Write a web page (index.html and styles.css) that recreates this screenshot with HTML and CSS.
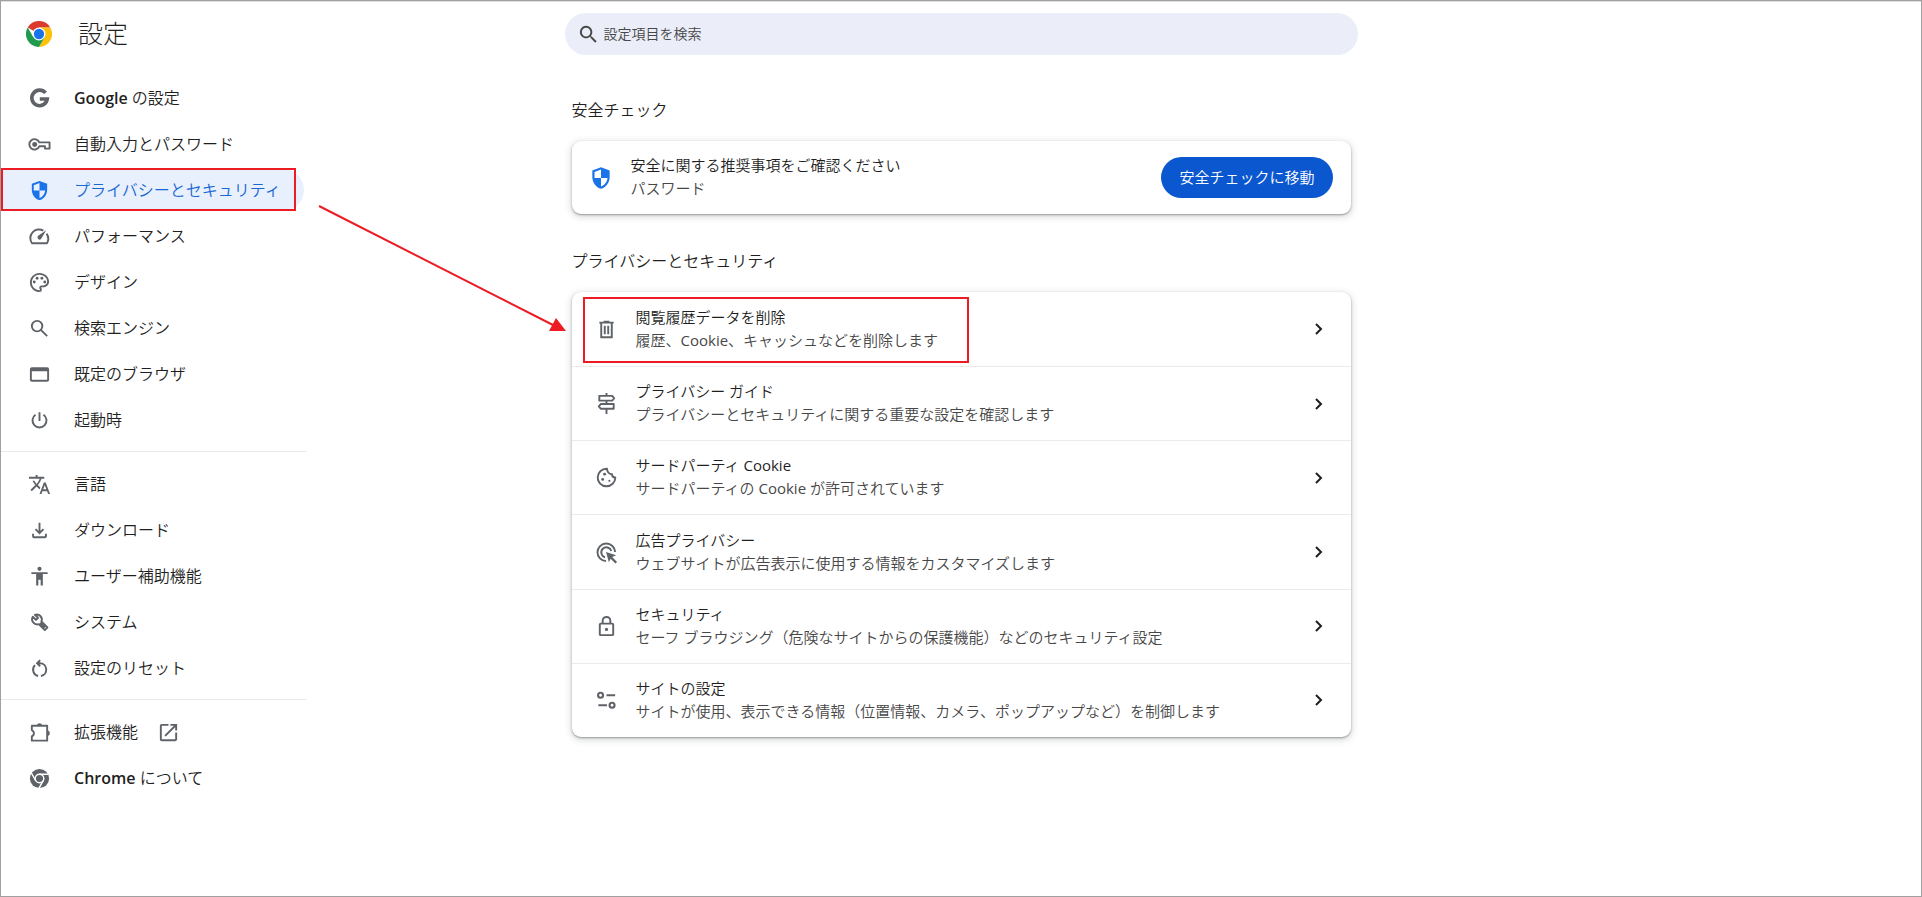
FILE: index.html
```html
<!DOCTYPE html>
<html lang="ja">
<head>
<meta charset="utf-8">
<meta name="viewport" content="width=device-width, initial-scale=1">
<title>設定</title>
<link rel="stylesheet" href="styles.css">
</head>
<body>
<div class="window">
  <header class="toolbar">
    <div class="brand">
      <svg class="logo" viewBox="0 0 48 48" aria-hidden="true">
        <path fill="#db3a2c" d="M24 24 3.2 12A24 24 0 0 1 44.8 12H24z"/>
        <path fill="#ffc107" d="M44.8 12A24 24 0 0 1 24 48L34.4 30 24 12z"/>
        <path fill="#209a4c" d="M3.2 12A24 24 0 0 0 24 48L34.4 30 24 24 13.6 30z"/>
        <circle cx="24" cy="24" r="12" fill="#fff"/>
        <circle cx="24" cy="24" r="9.5" fill="#1a73e8"/>
      </svg>
      <h1 class="title">設定</h1>
    </div>
    <label class="search">
      <svg class="search-icon" viewBox="0 0 24 24" aria-hidden="true"><path d="M15.5 14h-.79l-.28-.27A6.5 6.5 0 1 0 13.73 14.43l.27.28v.79l5 4.99L20.49 19zm-6 0a4.5 4.5 0 1 1 0-9 4.5 4.5 0 0 1 0 9z"/></svg>
      <input class="search-input" type="search" placeholder="設定項目を検索" aria-label="設定項目を検索">
    </label>
  </header>

  <div class="body">
    <nav class="sidebar" aria-label="設定">
      <ul class="menu">
        <li><a class="item" href="#google"><svg class="icon" viewBox="0 0 24 24"><path fill="none" stroke="currentColor" stroke-width="3.8" d="M18.3 6.2A8.1 8.1 0 1 0 20.1 12.500H12.3"/></svg><span class="label"><span class="latin">Google</span> の設定</span></a></li>
        <li><a class="item" href="#autofill"><svg class="icon" viewBox="0 0 24 24"><path fill="none" stroke="currentColor" stroke-width="2" stroke-linejoin="round" d="M11.800 9.800H22.500v6.500h-4.800v-2.400h-5.900A5.400 5.400 0 1 1 11.800 9.800z"/><circle cx="7" cy="12" r="2.600"/></svg><span class="label">自動入力とパスワード</span></a></li>
        <li><a class="item selected" href="#privacy" aria-current="page"><svg class="icon" viewBox="0 0 24 24"><path fill-rule="evenodd" d="M12 2 4 5v6.090c0 5.050 3.410 9.760 8 10.910 4.590-1.150 8-5.860 8-10.910V5zM12 4.100V12h6c-.5 3.700-2.900 6.900-6 7.900V12H6V6.400z"/></svg><span class="label">プライバシーとセキュリティ</span></a></li>
        <li><a class="item" href="#performance"><svg class="icon" viewBox="0 0 24 24"><path fill="none" stroke="currentColor" stroke-width="2" stroke-linejoin="round" d="M16 5.900A9 9 0 0 0 4.200 19H19.800A9 9 0 0 0 19.300 9"/><path d="m19 5.500-5.200 8.800a2.200 2.200 0 1 1-3.200-3z"/></svg><span class="label">パフォーマンス</span></a></li>
        <li><a class="item" href="#design"><svg class="icon" viewBox="0 0 24 24"><path d="M12 22C6.490 22 2 17.510 2 12S6.490 2 12 2s10 4.040 10 9c0 3.310-2.690 6-6 6h-1.770c-.28 0-.5.220-.5.500 0 .120.050.230.130.330.410.470.640 1.060.640 1.670A2.500 2.500 0 0 1 12 22m0-18c-4.410 0-8 3.590-8 8s3.590 8 8 8c.280 0 .5-.220.500-.5a.54.54 0 0 0-.140-.350c-.410-.460-.630-1.050-.630-1.650a2.500 2.500 0 0 1 2.500-2.500H16c2.210 0 4-1.790 4-4 0-3.860-3.590-7-8-7"/><circle cx="6.500" cy="11.500" r="1.500"/><circle cx="9.500" cy="7.500" r="1.500"/><circle cx="14.500" cy="7.500" r="1.500"/><circle cx="17.500" cy="11.500" r="1.500"/></svg><span class="label">デザイン</span></a></li>
        <li><a class="item" href="#search"><svg class="icon" viewBox="0 0 24 24"><g fill="none" stroke="currentColor" stroke-width="2"><circle cx="9.500" cy="9.500" r="5.500"/><path d="m13.400 13.400 6.600 6.600"/></g></svg><span class="label">検索エンジン</span></a></li>
        <li><a class="item" href="#browser"><svg class="icon" viewBox="0 0 24 24"><path fill-rule="evenodd" d="M4 4.500h16a2 2 0 0 1 2 2v11a2 2 0 0 1-2 2H4a2 2 0 0 1-2-2v-11a2 2 0 0 1 2-2m0 4v9h16v-9z"/></svg><span class="label">既定のブラウザ</span></a></li>
        <li><a class="item" href="#startup"><svg class="icon" viewBox="0 0 24 24"><path fill="none" stroke="currentColor" stroke-width="2" d="M12 3.500V12.500M7.800 6a7.300 7.300 0 1 0 8.400 0"/></svg><span class="label">起動時</span></a></li>
      </ul>
      <ul class="menu">
        <li><a class="item" href="#languages"><svg class="icon" viewBox="0 0 24 24"><path d="m12.870 15.070-2.540-2.510.030-.030A17.520 17.520 0 0 0 14.070 6H17V4h-7V2H8v2H1v1.990h11.170C11.500 7.920 10.440 9.750 9 11.350 8.070 10.320 7.300 9.190 6.690 8h-2c.730 1.630 1.730 3.170 2.980 4.560l-5.090 5.020L4 19l5-5 3.110 3.110zM18.500 10h-2L12 22h2l1.120-3h4.750L21 22h2zm-2.620 7 1.620-4.330L19.120 17z"/></svg><span class="label">言語</span></a></li>
        <li><a class="item" href="#downloads"><svg class="icon" viewBox="0 0 24 24"><path fill="none" stroke="currentColor" stroke-width="2" d="M12 4v10.500M7.800 10.500l4.200 4.200 4.200-4.200M5.300 15.500v2.500a1 1 0 0 0 1 1h11.400a1 1 0 0 0 1-1v-2.500"/></svg><span class="label">ダウンロード</span></a></li>
        <li><a class="item" href="#a11y"><svg class="icon" viewBox="0 0 24 24"><circle cx="12" cy="4" r="2.200"/><path d="M20.500 9.500H15.500V21.500h-2.300v-6h-2.400v6H8.500V9.500h-5v-2h17z"/></svg><span class="label">ユーザー補助機能</span></a></li>
        <li><a class="item" href="#system"><svg class="icon" viewBox="0 0 24 24"><path fill="none" stroke="currentColor" stroke-width="2" stroke-linejoin="round" d="m5 6 3.300 3.300 2.200-2.200L7.200 4A5.300 5.300 0 0 1 14 11l6.200 6.200-2.700 2.700L11.200 13.700A5.300 5.300 0 0 1 5 6zM12.500 12.500l5 5"/></svg><span class="label">システム</span></a></li>
        <li><a class="item" href="#reset"><svg class="icon" viewBox="0 0 24 24"><path fill="none" stroke="currentColor" stroke-width="2" d="M10.500 19.800A6.700 6.700 0 0 1 7.300 8.500M13.500 19.800A6.700 6.700 0 0 0 12.500 6.500H10M12.700 3.300 9.500 6.500l3.200 3.200"/></svg><span class="label">設定のリセット</span></a></li>
      </ul>
      <ul class="menu">
        <li><a class="item" href="#extensions"><svg class="icon" viewBox="0 0 24 24"><path fill="none" stroke="currentColor" stroke-width="2" stroke-linejoin="round" d="M4 5h16v15.500H4v-4.500c3-1.500 3-5 0-6.500z"/><path d="M9.300 5a2.700 2.700 0 0 1 5.400 0zM20 10a2.700 2.700 0 0 1 0 5.400z"/></svg><span class="label">拡張機能</span><svg class="icon external" viewBox="0 0 24 24"><path d="M19 19H5V5h7V3H5a2 2 0 0 0-2 2v14a2 2 0 0 0 2 2h14c1.100 0 2-.900 2-2v-7h-2zM14 3v2h3.590l-9.830 9.830 1.410 1.410L19 6.410V10h2V3z"/></svg></a></li>
        <li><a class="item" href="#about"><svg class="icon" viewBox="0 0 24 24"><circle cx="12" cy="12" r="10"/><g fill="none" stroke="#fff" stroke-width="1.500"><circle cx="12" cy="12" r="4.500"/><path d="M12 7.500h9.500M8.100 14.200 3.300 6M15.900 14.200 11.200 22.500"/></g></svg><span class="label"><span class="latin">Chrome</span> について</span></a></li>
      </ul>
    </nav>

    <main class="content">
      <section>
        <h2 class="heading">安全チェック</h2>
        <div class="card safety">
          <svg class="shield" viewBox="0 0 24 24" aria-hidden="true"><path fill-rule="evenodd" d="M12 2 4 5v6.090c0 5.050 3.410 9.760 8 10.910 4.590-1.150 8-5.860 8-10.910V5zM12 4.100V12h6c-.5 3.700-2.900 6.900-6 7.900V12H6V6.400z"/></svg>
          <div class="text"><div class="name">安全に関する推奨事項をご確認ください</div><div class="note">パスワード</div></div>
          <button class="action" type="button">安全チェックに移動</button>
        </div>
      </section>
      <section>
        <h2 class="heading">プライバシーとセキュリティ</h2>
        <div class="card rows">
          <a class="row" href="#clear"><svg class="icon" viewBox="0 0 24 24"><path fill="none" stroke="currentColor" stroke-width="2" d="M6.500 5v15h11V5M4.500 4.800h15M9 3.800h6M10.200 8v9M13.800 8v9"/></svg><span class="text"><span class="name">閲覧履歴データを削除</span><span class="note">履歴、Cookie、キャッシュなどを削除します</span></span><svg class="chevron" viewBox="0 0 12 12"><path d="m3 1 5 5-5 5"/></svg></a>
          <a class="row" href="#guide"><svg class="icon" viewBox="0 0 24 24"><path fill="none" stroke="currentColor" stroke-width="2" stroke-linejoin="round" d="M12 1v3M12 9v3.500M12 17.500V23M4.500 4h13.500L20 6.500 18 9H4.500zM19.500 12.500H6L4 15l2 2.500h13.500z"/></svg><span class="text"><span class="name">プライバシー ガイド</span><span class="note">プライバシーとセキュリティに関する重要な設定を確認します</span></span><svg class="chevron" viewBox="0 0 12 12"><path d="m3 1 5 5-5 5"/></svg></a>
          <a class="row" href="#cookies"><svg class="icon" viewBox="0 0 24 24"><path fill="none" stroke="currentColor" stroke-width="2" stroke-linejoin="round" d="M12.500 2.800A9.200 9.200 0 1 0 21.200 12c-2.200 0-3.400-1.500-3.400-3.500-3 .3-5.400-2.500-5.300-5.700z"/><circle cx="10" cy="8.500" r="1.500"/><circle cx="8" cy="14" r="1.500"/><circle cx="15" cy="15.500" r="1.100"/></svg><span class="text"><span class="name">サードパーティ Cookie</span><span class="note">サードパーティの Cookie が許可されています</span></span><svg class="chevron" viewBox="0 0 12 12"><path d="m3 1 5 5-5 5"/></svg></a>
          <a class="row" href="#ads"><svg class="icon" viewBox="0 0 24 24"><path fill="none" stroke="currentColor" stroke-width="2" d="M11.500 21A9.200 9.200 0 1 1 21 11.500M10.500 17A5.300 5.300 0 1 1 17 10.500"/><path d="m11.500 11.500 10.500 3.300-4 2 5 5-1.700 1.700-5-5-1.800 3.800z"/></svg><span class="text"><span class="name">広告プライバシー</span><span class="note">ウェブサイトが広告表示に使用する情報をカスタマイズします</span></span><svg class="chevron" viewBox="0 0 12 12"><path d="m3 1 5 5-5 5"/></svg></a>
          <a class="row" href="#security"><svg class="icon" viewBox="0 0 24 24"><path d="M18 8h-1V6A5 5 0 0 0 7 6v2H6a2 2 0 0 0-2 2v10c0 1.100.900 2 2 2h12a2 2 0 0 0 2-2V10a2 2 0 0 0-2-2M9 6a3 3 0 0 1 6 0v2H9zm9 14H6V10h12zm-6-3.300a1.700 1.700 0 1 0 0-3.400 1.700 1.700 0 0 0 0 3.400"/></svg><span class="text"><span class="name">セキュリティ</span><span class="note">セーフ ブラウジング（危険なサイトからの保護機能）などのセキュリティ設定</span></span><svg class="chevron" viewBox="0 0 12 12"><path d="m3 1 5 5-5 5"/></svg></a>
          <a class="row" href="#sites"><svg class="icon" viewBox="0 0 24 24"><g fill="none" stroke="currentColor" stroke-width="2.200"><circle cx="5.800" cy="6.500" r="2.600"/><path d="M12 6.500h9M3.500 17h9"/><circle cx="17.800" cy="17" r="2.600"/></g></svg><span class="text"><span class="name">サイトの設定</span><span class="note">サイトが使用、表示できる情報（位置情報、カメラ、ポップアップなど）を制御します</span></span><svg class="chevron" viewBox="0 0 12 12"><path d="m3 1 5 5-5 5"/></svg></a>
        </div>
      </section>
    </main>
  </div>

  <div class="mark mark-menu"></div>
  <div class="mark mark-row"></div>
  <svg class="arrow" viewBox="0 0 250 130" aria-hidden="true"><path d="m1 1 236 120" fill="none" stroke="#ed1c24" stroke-width="2"/><path d="M248 126h-17l7-13z" fill="#ed1c24"/></svg>
</div>
</body>
</html>
```
FILE: styles.css
```css
* { box-sizing: border-box; }

body {
  margin: 0;
  background: #fff;
  color: #1f1f1f;
  font-family: "Open Sans", "Noto Sans CJK JP DemiLight", "Noto Sans CJK JP", sans-serif;
  font-size: 15px;
}

.window {
  position: relative;
  min-height: 100vh;
  border: 1px solid #a0a0a0;
  box-shadow: inset 0 1px #e0e0e0;
}

a { color: inherit; text-decoration: none; }
h1, h2, ul { margin: 0; padding: 0; font-weight: 400; list-style: none; }
svg { flex: none; fill: currentColor; }

.toolbar, .body {
  display: grid;
  grid-template-columns: minmax(306px, 1fr) minmax(0, 779px) minmax(0, 1fr);
}

.toolbar { height: 66px; align-items: center; }
.brand { display: flex; align-items: center; gap: 26px; padding-left: 25px; }
.logo { width: 26px; height: 26px; }
.title {
  padding-bottom: 4px;
  font-family: "Noto Sans CJK JP Light", "Noto Sans CJK JP", sans-serif;
  font-size: 25px;
  line-height: 34px;
}

.search {
  display: flex;
  align-items: center;
  gap: 4px;
  height: 42px;
  margin: 0 -7px;
  padding: 0 12px;
  border-radius: 21px;
  background: #ebeef8;
  color: #474747;
}
.search-icon { width: 23px; height: 23px; }
.search-input {
  flex: 1;
  padding: 0 0 2px;
  border: 0;
  outline: 0;
  background: none;
  font: inherit;
  font-size: 14px;
}
.search-input::placeholder { color: #474747; opacity: 1; }

.sidebar { width: 305px; padding-top: 8px; }
.menu + .menu { margin-top: 10px; padding-top: 9px; border-top: 1px solid #e8e8e8; }
.item {
  display: flex;
  align-items: center;
  gap: 23px;
  height: 42px;
  margin: 2px 2px 4px 0;
  padding-left: 27px;
  border-radius: 0 21px 21px 0;
  font-size: 16px;
}
.label { padding-bottom: 2px; }
.icon { width: 23px; height: 23px; color: #5f6368; }
.latin { font-weight: 600; }
.external { margin-left: -4px; }
.selected { background: #e8f0fe; color: #1967d2; }
.selected .icon { color: #1a73e8; }

.heading { padding: 32px 0 19px; font-size: 16px; line-height: 23px; }
section + section .heading { padding-top: 36px; }
.card {
  border-radius: 9px;
  background: #fff;
  box-shadow: 0 1px 2px rgba(60, 64, 67, .45), 0 2px 7px 1px rgba(60, 64, 67, .2);
}
.safety { display: flex; align-items: center; gap: 17px; min-height: 73px; padding: 0 18px 0 16px; }
.shield { width: 26px; height: 26px; color: #1a73e8; }
.text { flex: 1; padding-bottom: 1px; line-height: 23px; }
.name, .note { display: block; }
.note { color: #474747; }
.action {
  height: 41px;
  padding: 0 18px 2px;
  border: 0;
  border-radius: 21px;
  background: #0b57d0;
  color: #fff;
  font: inherit;
}

.rows { display: grid; grid-auto-rows: 1fr; min-height: 445px; }
.row { display: flex; align-items: center; gap: 18px; padding: 0 26px 0 23px; }
.row + .row { border-top: 1px solid #ebebeb; }
.chevron { width: 12px; height: 12px; fill: none; stroke: #1f1f1f; stroke-width: 2; }

.mark { position: absolute; border: 2px solid #ed1c24; pointer-events: none; }
.mark-menu { top: 167px; left: 0; width: 295px; height: 43px; }
.mark-row { top: 296px; left: 582px; width: 386px; height: 66px; }
.arrow { position: absolute; top: 204px; left: 317px; width: 250px; height: 130px; pointer-events: none; }
```
